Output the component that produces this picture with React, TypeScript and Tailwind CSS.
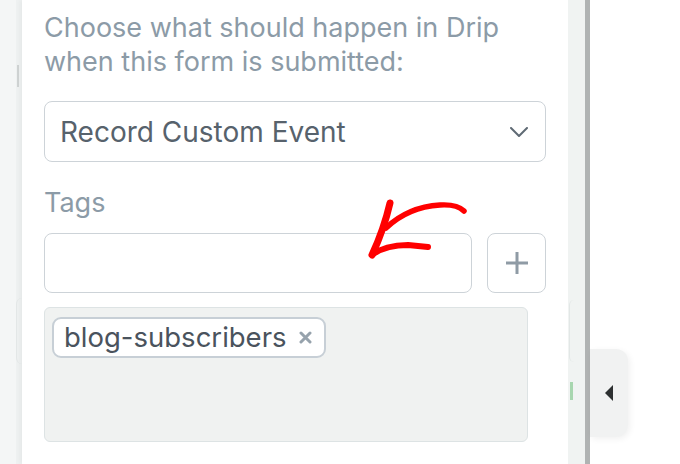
function RedArrow() {
  return (
    <svg
      className="pointer-events-none absolute left-[338px] top-[195px]"
      width="112"
      height="70"
      viewBox="0 0 112 70"
      fill="none"
      stroke="#ff0000"
      strokeLinecap="round"
      strokeLinejoin="round"
    >
      <path d="M30 8 Q24 34 12 60" strokeWidth="7" />
      <path d="M12 60 Q25 50 48 50 L68 52" strokeWidth="6" />
      <path d="M26 33 Q48 12 80 10 Q97 9 104 16" strokeWidth="5.5" />
    </svg>
  );
}

export default function App() {
  return (
    <div className="flex h-[464px] w-[680px] overflow-hidden bg-white font-['Inter',sans-serif]">
      {/* blurred page behind the drawer, left side */}
      <div className="relative flex w-[22px] shrink-0 bg-[#f4f6f6]">
        <div className="ml-auto w-[6px] bg-[#eef1f1]" />
        <div className="absolute left-[17px] top-[65px] h-[22px] w-[2px] bg-[#cfd3d3]" />
        <div className="absolute left-[16px] top-[298px] h-[66px] w-[6px] rounded-l-[6px] border-l border-[#e3e7e7]" />
      </div>

      {/* drawer panel */}
      <div className="relative w-[546px] shrink-0 bg-white px-[22px] pt-[11px] shadow-[-2px_0_4px_rgba(0,0,0,0.04)]">
        <p className="text-[27px] leading-[34px] text-[#8c9ba7]">
          Choose what should happen in Drip when this form is submitted:
        </p>

        <div className="mt-[22px] flex h-[61px] items-center justify-between rounded-[8px] border border-[#cdd3d8] pl-[15px] pr-[17px]">
          <span className="text-[28px] text-[#57626c]">Record Custom Event</span>
          <svg width="18" height="10" viewBox="0 0 18 10" fill="none" stroke="#5f6a74" strokeWidth="2" strokeLinecap="round" strokeLinejoin="round">
            <path d="M1 1 L9 9 L17 1" />
          </svg>
        </div>

        <div className="mt-[24px] text-[27px] leading-[34px] text-[#8c9ba7]">Tags</div>

        <div className="mt-[13px] flex gap-[15px]">
          <div className="h-[60px] w-[428px] rounded-[8px] border border-[#cdd3d8] bg-white" />
          <button className="flex h-[60px] w-[59px] items-center justify-center rounded-[8px] border border-[#cdd3d8] bg-white">
            <svg width="22" height="22" viewBox="0 0 22 22" fill="none" stroke="#8f9ba5" strokeWidth="3">
              <path d="M11 0 V22 M0 11 H22" />
            </svg>
          </button>
        </div>

        <div className="mt-[14px] h-[135px] w-[484px] rounded-[6px] border border-[#dde3e4] bg-[#f0f2f1] pl-[7px] pt-[9px]">
          <div className="inline-flex h-[41px] items-center gap-[12px] rounded-[9px] border-2 border-[#c7cfd6] bg-white pl-[10px] pr-[12px]">
            <span className="text-[27.5px] text-[#4a535d]">blog-subscribers</span>
            <svg width="13" height="13" viewBox="0 0 13 13" fill="none" stroke="#96a2ac" strokeWidth="3" strokeLinecap="round">
              <path d="M2 2 L11 11 M11 2 L2 11" />
            </svg>
          </div>
        </div>

        <RedArrow />
      </div>

      {/* blurred page behind, right side */}
      <div className="relative w-[17px] shrink-0 bg-[#f0f3f2]">
        <div className="absolute left-[1px] top-[300px] h-[62px] w-[5px] rounded-l-[5px] border-l border-[#e2e7e6]" />
        <div className="absolute left-[2px] top-[382px] h-[18px] w-[3px] bg-[#a7d6af]" />
      </div>
      <div className="w-[5px] shrink-0 bg-[#b0b3b3]" />

      <div className="flex-1 bg-white pt-[349px]">
        <div className="flex h-[88px] w-[38px] items-center justify-center rounded-r-[12px] bg-[#f1f2f2] shadow-[2px_2px_6px_rgba(0,0,0,0.06)]">
          <div className="h-0 w-0 border-y-[8px] border-r-[8px] border-y-transparent border-r-[#2d3031]" />
        </div>
      </div>
    </div>
  );
}
